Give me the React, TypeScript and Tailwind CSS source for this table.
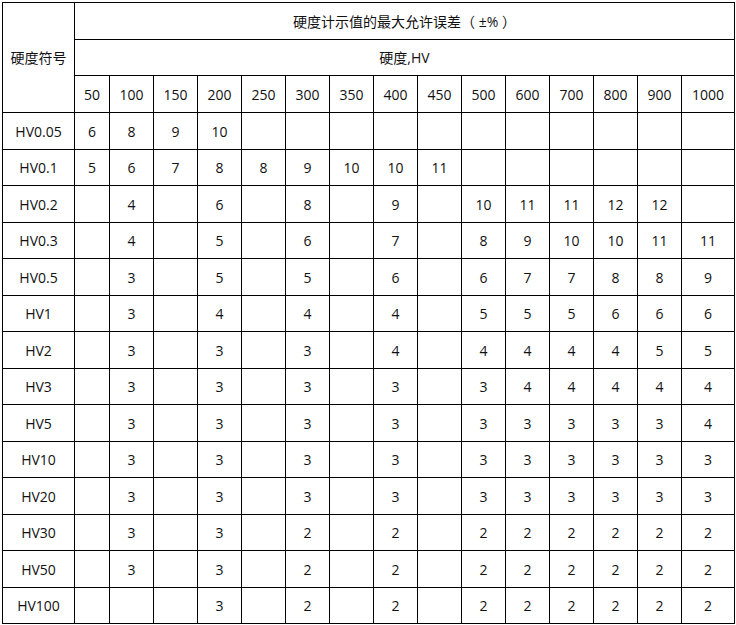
import React from 'react';

const loads = ['50', '100', '150', '200', '250', '300', '350', '400', '450', '500', '600', '700', '800', '900', '1000'];

const rows: [string, string[]][] = [
  ['HV0.05', ['6', '8', '9', '10', '', '', '', '', '', '', '', '', '', '', '']],
  ['HV0.1', ['5', '6', '7', '8', '8', '9', '10', '10', '11', '', '', '', '', '', '']],
  ['HV0.2', ['', '4', '', '6', '', '8', '', '9', '', '10', '11', '11', '12', '12', '']],
  ['HV0.3', ['', '4', '', '5', '', '6', '', '7', '', '8', '9', '10', '10', '11', '11']],
  ['HV0.5', ['', '3', '', '5', '', '5', '', '6', '', '6', '7', '7', '8', '8', '9']],
  ['HV1', ['', '3', '', '4', '', '4', '', '4', '', '5', '5', '5', '6', '6', '6']],
  ['HV2', ['', '3', '', '3', '', '3', '', '4', '', '4', '4', '4', '4', '5', '5']],
  ['HV3', ['', '3', '', '3', '', '3', '', '3', '', '3', '4', '4', '4', '4', '4']],
  ['HV5', ['', '3', '', '3', '', '3', '', '3', '', '3', '3', '3', '3', '3', '4']],
  ['HV10', ['', '3', '', '3', '', '3', '', '3', '', '3', '3', '3', '3', '3', '3']],
  ['HV20', ['', '3', '', '3', '', '3', '', '3', '', '3', '3', '3', '3', '3', '3']],
  ['HV30', ['', '3', '', '3', '', '2', '', '2', '', '2', '2', '2', '2', '2', '2']],
  ['HV50', ['', '3', '', '3', '', '2', '', '2', '', '2', '2', '2', '2', '2', '2']],
  ['HV100', ['', '', '', '3', '', '2', '', '2', '', '2', '2', '2', '2', '2', '2']],
];

const cell = 'border border-black text-center align-middle p-0';

export default function App() {
  return (
    <div className="bg-white w-[736px] h-[625px] pt-[2px] pl-[2px] font-['Open_Sans','Noto_Sans_CJK_SC',sans-serif] text-[14px] text-[#111]">
      <table className="table-fixed border-collapse w-[732px]">
        <colgroup>
          <col className="w-[72px]" />
          <col className="w-[35px]" />
          {loads.slice(1, -1).map((l) => (
            <col key={l} className="w-[44px]" />
          ))}
          <col className="w-[53px]" />
        </colgroup>
        <thead>
          <tr className="h-[37px]">
            <th rowSpan={3} className={`${cell} font-normal`}>硬度符号</th>
            <th colSpan={15} className={`${cell} font-normal`}>硬度计示值的最大允许误差（ ±% ）</th>
          </tr>
          <tr className="h-[36px]">
            <th colSpan={15} className={`${cell} font-normal`}>硬度,HV</th>
          </tr>
          <tr className="h-[37px]">
            {loads.map((l) => (
              <th key={l} className={`${cell} font-normal`}>{l}</th>
            ))}
          </tr>
        </thead>
        <tbody>
          {rows.map(([name, vals], i) => (
            <tr key={name} className={i % 2 === 0 ? 'h-[37px]' : 'h-[36px]'}>
              <td className={cell}>{name}</td>
              {vals.map((v, j) => (
                <td key={j} className={cell}>{v}</td>
              ))}
            </tr>
          ))}
        </tbody>
      </table>
    </div>
  );
}
